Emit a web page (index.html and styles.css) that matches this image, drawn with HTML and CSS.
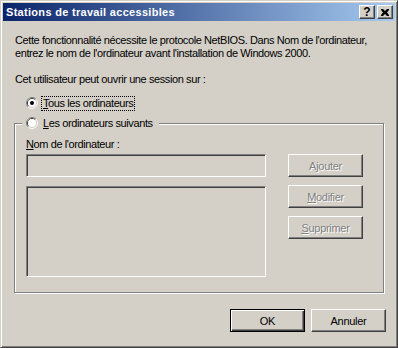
FILE: index.html
```html
<!DOCTYPE html>
<html lang="fr">
<head>
<meta charset="utf-8">
<title>Stations de travail accessibles</title>
<link rel="stylesheet" href="styles.css">
</head>
<body>
<div class="window">
  <div class="caption">
    <span class="title">Stations de travail accessibles</span>
    <div class="cap-buttons">
      <span class="cap-btn help">?</span>
      <span class="cap-btn"><svg width="8" height="7" viewBox="0 0 8 7"><path d="M0 0h2l2 2l2-2h2v1l-2 2.5l2 2.5v1h-2l-2-2l-2 2h-2v-1l2-2.5l-2-2.5z" fill="#000"/></svg></span>
    </div>
  </div>
  <div class="client">
    <p class="intro">Cette fonctionnalité nécessite le protocole NetBIOS. Dans Nom de l'ordinateur,<br>entrez le nom de l'ordinateur avant l'installation de Windows 2000.</p>
    <p class="prompt">Cet utilisateur peut ouvrir une session sur :</p>
    <div class="radio-row first">
      <svg class="radio" width="12" height="12" viewBox="0 0 12 12">
        <path d="M2.11 9.89A5.5 5.5 0 0 1 9.89 2.11" stroke="#808080" fill="none"/>
        <path d="M9.89 2.11A5.5 5.5 0 0 1 2.11 9.89" stroke="#fff" fill="none"/>
        <path d="M2.82 9.18A4.5 4.5 0 0 1 9.18 2.82" stroke="#404040" fill="none"/>
        <path d="M9.18 2.82A4.5 4.5 0 0 1 2.82 9.18" stroke="#d4d0c8" fill="none"/>
        <circle cx="6" cy="6" r="4" fill="#fff"/>
        <circle cx="6" cy="6" r="2" fill="#000"/>
      </svg>
      <span class="radio-label focus"><u>T</u>ous les ordinateurs</span>
    </div>
    <fieldset class="group">
      <legend class="radio-row legend">
        <svg class="radio" width="12" height="12" viewBox="0 0 12 12">
          <path d="M2.11 9.89A5.5 5.5 0 0 1 9.89 2.11" stroke="#808080" fill="none"/>
          <path d="M9.89 2.11A5.5 5.5 0 0 1 2.11 9.89" stroke="#fff" fill="none"/>
          <path d="M2.82 9.18A4.5 4.5 0 0 1 9.18 2.82" stroke="#404040" fill="none"/>
          <path d="M9.18 2.82A4.5 4.5 0 0 1 2.82 9.18" stroke="#d4d0c8" fill="none"/>
          <circle cx="6" cy="6" r="4" fill="#fff"/>
        </svg>
        <span class="radio-label"><u>L</u>es ordinateurs suivants</span>
      </legend>
      <div class="group-grid">
        <span class="field-label"><u>N</u>om de l'ordinateur :</span>
        <span></span>
        <div class="textbox"></div>
        <button class="btn disabled">A<u>j</u>outer</button>
        <div class="listbox"></div>
        <div class="btn-col">
          <button class="btn disabled"><u>M</u>odifier</button>
          <button class="btn disabled"><u>S</u>upprimer</button>
        </div>
      </div>
    </fieldset>
    <div class="actions">
      <button class="btn default">OK</button>
      <button class="btn">Annuler</button>
    </div>
  </div>
</div>
</body>
</html>
```
FILE: styles.css
```css
html, body {
  margin: 0;
  padding: 0;
  background: #d4d0c8;
}
body {
  font-family: "Liberation Sans", Arial, sans-serif;
  font-size: 11px;
  letter-spacing: -0.4px;
  color: #000;
}
.window {
  width: 398px;
  height: 348px;
  box-sizing: border-box;
  background: #d4d0c8;
  border: 1px solid;
  border-color: #d4d0c8 #404040 #404040 #d4d0c8;
  box-shadow: inset 1px 1px #fff, inset -1px -1px #808080;
  padding: 2px;
  display: flex;
  flex-direction: column;
}
.caption {
  height: 18px;
  flex: none;
  background: linear-gradient(to right, #0a246a, #a6caf0);
  display: flex;
  align-items: center;
  justify-content: space-between;
  padding: 0 2px 0 3px;
}
.title {
  color: #fff;
  font-weight: bold;
  font-size: 11px;
  line-height: 13px;
  letter-spacing: 0.3px;
}
.cap-buttons {
  display: flex;
  gap: 2px;
}
.cap-btn {
  width: 16px;
  height: 14px;
  box-sizing: border-box;
  background: #d4d0c8;
  border: 1px solid;
  border-color: #fff #404040 #404040 #fff;
  box-shadow: inset -1px -1px #808080;
  display: flex;
  align-items: center;
  justify-content: center;
}
.help {
  font-weight: bold;
  font-size: 12px;
  line-height: 12px;
  letter-spacing: 0;
}
.client {
  flex: 1;
  padding: 0 9px 0 11px;
}
.intro, .prompt {
  margin: 13px 0 0 1px;
  line-height: 13px;
  white-space: nowrap;
}
.radio-row {
  display: flex;
  align-items: center;
  height: 16px;
}
.radio-row.first {
  margin-top: 9px;
  padding-left: 12px;
}
.radio {
  flex: none;
}
.radio-label {
  margin-left: 3px;
  padding: 0 1px;
  border: 1px dotted transparent;
  line-height: 13px;
  white-space: nowrap;
}
.radio-label.focus {
  border-color: #000;
}
.group {
  margin: 4px 0 0 0;
  width: 370px;
  box-sizing: border-box;
  min-width: 0;
  border: 1px solid #808080;
  box-shadow: inset 1px 1px #fff, 1px 1px #fff;
  padding: 0 0 15px 7px;
}
.legend {
  padding: 0 4px;
  background: #d4d0c8;
}
.group-grid {
  margin: 7px 0 0 4px;
  display: grid;
  grid-template-columns: 240px 75px;
  column-gap: 22px;
  align-items: start;
}
.field-label {
  line-height: 13px;
  margin-bottom: 3px;
  white-space: nowrap;
}
.textbox, .listbox {
  box-sizing: border-box;
  border: 1px solid;
  border-color: #808080 #fff #fff #808080;
  box-shadow: inset 1px 1px #404040, inset -1px -1px #d4d0c8;
  background: #d4d0c8;
}
.textbox {
  height: 23px;
}
.listbox {
  height: 91px;
  margin-top: 9px;
}
.btn-col {
  margin-top: 8px;
  display: flex;
  flex-direction: column;
  gap: 8px;
}
.btn {
  width: 75px;
  height: 23px;
  box-sizing: border-box;
  margin: 0;
  padding: 0;
  background: #d4d0c8;
  border: 1px solid;
  border-color: #fff #404040 #404040 #fff;
  box-shadow: inset -1px -1px #808080;
  font-family: "Liberation Sans", Arial, sans-serif;
  font-size: 11px;
  letter-spacing: -0.3px;
  color: #000;
  text-align: center;
}
.btn.disabled {
  color: #808080;
  text-shadow: 1px 1px #fff;
}
.btn.default {
  border-color: #000;
  box-shadow: inset 1px 1px #fff, inset -1px -1px #404040, inset -2px -2px #808080;
}
.actions {
  margin-top: 16px;
  display: flex;
  justify-content: flex-end;
  gap: 6px;
}
```
